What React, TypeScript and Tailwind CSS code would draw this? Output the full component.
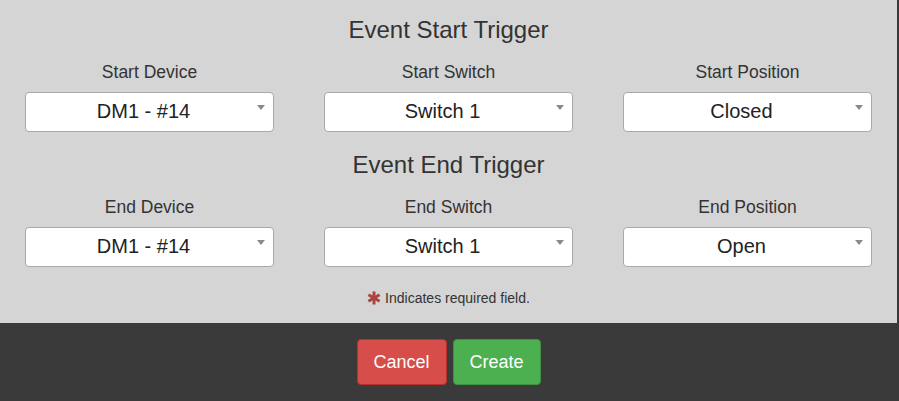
const font = { fontFamily: '"Liberation Sans", Arial, sans-serif' };

type Field = { label: string; value: string };

function Select({ value }: { value: string }) {
  return (
    <div className="relative flex h-[40px] w-full items-center justify-center rounded-[4px] border border-[#a9a9a9] bg-white pb-[3px] pr-[12px] text-[20px] text-[#222]">
      {value}
      <span className="absolute right-[8px] top-[12px] h-0 w-0 border-x-[4px] border-t-[5px] border-x-transparent border-t-[#8a8a8a]" />
    </div>
  );
}

function Row({ title, fields, first }: { title: string; fields: Field[]; first?: boolean }) {
  return (
    <div className={first ? "" : "mt-[18px]"}>
      <h2 className="h-[30px] text-center text-[24px] leading-[30px] text-[#333]">{title}</h2>
      <div className="mt-[15px] grid grid-cols-3">
        {fields.map((f) => (
          <div key={f.label} className="flex flex-col items-center px-[25px]">
            <label className="h-[24px] text-[17.5px] leading-[24px] text-[#333]">{f.label}</label>
            <div className="mt-[8px] w-full">
              <Select value={f.value} />
            </div>
          </div>
        ))}
      </div>
    </div>
  );
}

function Asterisk() {
  return (
    <svg width="14" height="14" viewBox="0 0 14 14" className="mr-[4px]">
      <g stroke="#a94442" strokeWidth="3" strokeLinecap="butt">
        <line x1="7" y1="0.5" x2="7" y2="13.5" />
        <line x1="1.4" y1="3.75" x2="12.6" y2="10.25" />
        <line x1="1.4" y1="10.25" x2="12.6" y2="3.75" />
      </g>
    </svg>
  );
}

export default function App() {
  return (
    <div className="flex h-[401px] w-[899px] flex-col overflow-hidden bg-[#3a3a3a]" style={font}>
      <div className="w-[897px] bg-[#d5d5d5] pb-[15px] pt-[15px]">
        <Row
          first
          title="Event Start Trigger"
          fields={[
            { label: "Start Device", value: "DM1 - #14" },
            { label: "Start Switch", value: "Switch 1" },
            { label: "Start Position", value: "Closed" },
          ]}
        />
        <Row
          title="Event End Trigger"
          fields={[
            { label: "End Device", value: "DM1 - #14" },
            { label: "End Switch", value: "Switch 1" },
            { label: "End Position", value: "Open" },
          ]}
        />
        <div className="mt-[21px] flex h-[20px] items-center justify-center text-[14px] text-[#333]">
          <Asterisk />
          Indicates required field.
        </div>
      </div>
      <div className="flex w-[897px] justify-center gap-[6px] pt-[16px]">
        <button className="h-[46px] w-[90px] rounded-[4px] border border-[#b8302c] bg-[#d64d4a] text-[18px] text-white">
          Cancel
        </button>
        <button className="h-[46px] w-[88px] rounded-[4px] border border-[#3e9141] bg-[#4caf50] text-[18px] text-white">
          Create
        </button>
      </div>
    </div>
  );
}
